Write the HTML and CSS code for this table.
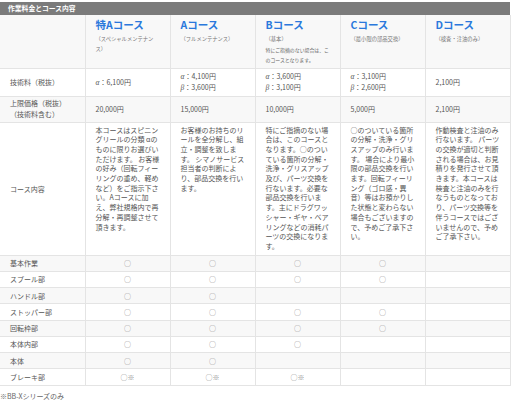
FILE: index.html
```html
<!DOCTYPE html>
<html lang="ja">
<head>
<meta charset="utf-8">
<title>作業料金とコース内容</title>
<link rel="stylesheet" href="styles.css">
</head>
<body>
<div class="page">
  <h2 class="bar">作業料金とコース内容</h2>
  <table class="courses">
    <colgroup>
      <col class="c"><col class="c"><col class="c"><col class="c"><col class="c"><col class="c">
    </colgroup>
    <thead>
      <tr class="head">
        <th class="label"></th>
        <th><div class="title">特Aコース</div><div class="sub">（スペシャルメンテナンス）</div></th>
        <th><div class="title">Aコース</div><div class="sub">（フルメンテナンス）</div></th>
        <th><div class="title">Bコース</div><div class="sub">（基本）</div><div class="tiny">特にご指摘のない場合は、このコースとなります。</div></th>
        <th><div class="title">Cコース</div><div class="sub">（最小限の部品交換）</div></th>
        <th><div class="title">Dコース</div><div class="sub">（検査・注油のみ）</div></th>
      </tr>
    </thead>
    <tbody>
      <tr class="fee">
        <th class="label">技術料（税抜）</th>
        <td><span class="greek">α</span>：6,100円</td>
        <td><span class="greek">α</span>：4,100円<br><span class="greek">β</span>：3,600円</td>
        <td><span class="greek">α</span>：3,600円<br><span class="greek">β</span>：3,100円</td>
        <td><span class="greek">α</span>：3,100円<br><span class="greek">β</span>：2,600円</td>
        <td>2,100円</td>
      </tr>
      <tr class="price">
        <th class="label">上限価格（税抜）<br>（技術料含む）</th>
        <td>20,000円</td>
        <td>15,000円</td>
        <td>10,000円</td>
        <td>5,000円</td>
        <td>2,100円</td>
      </tr>
      <tr class="desc">
        <th class="label">コース内容</th>
        <td>本コースはスピニングリールの分類 αのものに限りお選びいただけます。 お客様の好み（回転フィーリングの重め、軽めなど）をご指示下さい。Aコースに加え、弊社規格内で再分解・再調整させて頂きます。</td>
        <td>お客様のお持ちのリールを全分解し、組立・調整を致します。 シマノサービス担当者の判断により、部品交換を行います。</td>
        <td>特にご指摘のない場合は、このコースとなります。○のついている箇所の分解・洗浄・グリスアップ及び、パーツ交換を行ないます。必要な部品交換を行います。主にドラグワッシャー・ギヤ・ベアリングなどの消耗パーツの交換になります。</td>
        <td>○のついている箇所の分解・洗浄・グリスアップのみ行います。 場合により最小限の部品交換を行います。回転フィーリング（ゴロ感・異音）等はお預かりした状態と変わらない場合もございますので、予めご了承下さい。</td>
        <td>作動検査と注油のみ行ないます。 パーツの交換が適切と判断される場合は、お見積りを発行させて頂きます。本コースは検査と注油のみを行なうものとなっており、パーツ交換等を伴うコースではございませんので、予めご了承下さい。</td>
      </tr>
      <tr class="item"><th class="label">基本作業</th><td>○</td><td>○</td><td>○</td><td>○</td><td></td></tr>
      <tr class="item"><th class="label">スプール部</th><td>○</td><td>○</td><td>○</td><td>○</td><td></td></tr>
      <tr class="item"><th class="label">ハンドル部</th><td>○</td><td>○</td><td></td><td></td><td></td></tr>
      <tr class="item"><th class="label">ストッパー部</th><td>○</td><td>○</td><td>○</td><td>○</td><td></td></tr>
      <tr class="item"><th class="label">回転枠部</th><td>○</td><td>○</td><td>○</td><td>○</td><td></td></tr>
      <tr class="item"><th class="label">本体内部</th><td>○</td><td>○</td><td>○</td><td></td><td></td></tr>
      <tr class="item"><th class="label">本体</th><td>○</td><td>○</td><td></td><td></td><td></td></tr>
      <tr class="item"><th class="label">ブレーキ部</th><td>○※</td><td>○※</td><td>○※</td><td></td><td></td></tr>
    </tbody>
  </table>
  <p class="note">※BB-Xシリーズのみ</p>
</div>
</body>
</html>
```
FILE: styles.css
```css
html, body {
  margin: 0;
  padding: 0;
  background: #ffffff;
}
body {
  font-family: "Noto Sans CJK JP", "Noto Sans", sans-serif;
  color: #555555;
  text-spacing-trim: space-all;
}
.page {
  padding-top: 2px;
  width: 510px;
}
.bar {
  margin: 0;
  height: 13px;
  line-height: 13px;
  background: #7b7b7b;
  color: #ffffff;
  font-size: 6.8px;
  font-weight: 700;
  padding-left: 8px;
}
.courses {
  width: 510px;
  table-layout: fixed;
  border-collapse: collapse;
  font-size: 7px;
}
.courses col.c {
  width: 85px;
}
.courses th,
.courses td {
  border: 1px solid #e4e4e4;
  padding: 0 8px 0 10px;
  font-weight: 400;
  text-align: left;
  vertical-align: middle;
  color: #555555;
}
.courses tr:first-child th { border-top: none; }
.courses tr > :first-child { border-left: none; }
.head {
  background: #f8f8f8;
  height: 53px;
}
.head th {
  vertical-align: top;
  padding-top: 4px;
}
.title {
  color: #2a78dc;
  font-size: 10.5px;
  font-weight: 700;
  line-height: 12px;
}
.sub {
  margin-top: 3px;
  font-size: 5.3px;
  line-height: 10px;
  color: #777777;
}
.tiny {
  margin-top: 1px;
  font-size: 4.9px;
  line-height: 10px;
  color: #666666;
}
.courses tbody tr:nth-child(even) {
  background: #f8f8f8;
}
.fee { height: 28px; }
.fee td, .price th { line-height: 11px; }
.price { height: 26px; }
.label {
  padding-left: 11px;
}
.greek {
  font-family: "Liberation Serif", serif;
  font-style: italic;
  font-size: 7.5px;
}
.desc { height: 133px; }
.desc td {
  vertical-align: top;
  padding-top: 3px;
  line-height: 9.7px;
}
.item { height: 16.25px; }
.item td {
  text-align: center;
  padding: 0;
  color: #888888;
  line-height: 10px;
}
.note {
  margin: 5px 0 0 0;
  font-size: 7px;
  line-height: 10px;
  color: #666666;
}
```
